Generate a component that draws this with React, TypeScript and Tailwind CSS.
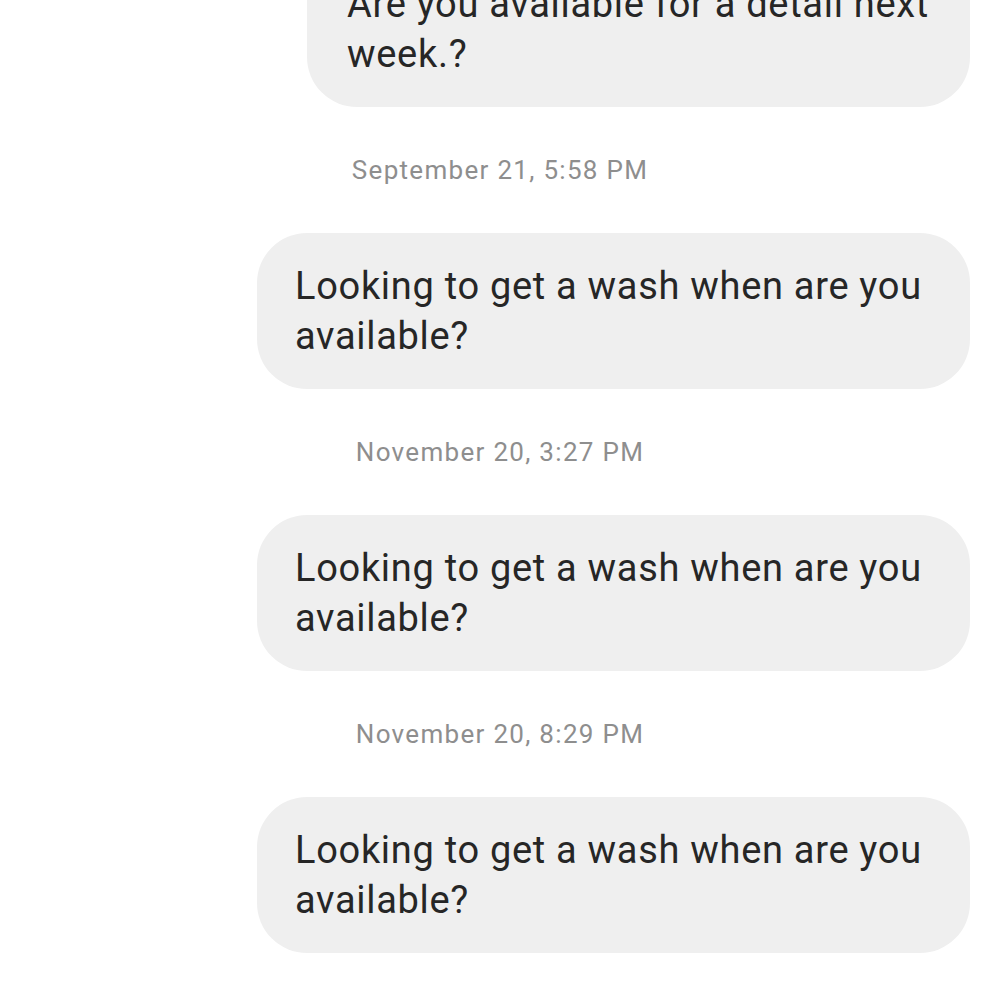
const messages = [
  { time: 'September 21, 5:58 PM', text: 'Looking to get a wash when are you available?' },
  { time: 'November 20, 3:27 PM', text: 'Looking to get a wash when are you available?' },
  { time: 'November 20, 8:29 PM', text: 'Looking to get a wash when are you available?' },
];

function Bubble({ text, className }: { text: string; className: string }) {
  return (
    <div
      className={`self-end mr-[30px] rounded-[50px] bg-[#efefef] pr-[20px] py-[28px] text-[38px] leading-[50px] tracking-[0.7px] text-[#262626] ${className}`}
    >
      {text}
    </div>
  );
}

export default function App() {
  return (
    <div className="w-[1000px] h-[1000px] overflow-hidden bg-white font-['Roboto',sans-serif]">
      <div className="flex flex-col">
        <Bubble text="Are you available for a detail next week.?" className="w-[663px] -mt-[49px] pl-[40px]" />
        {messages.map((m) => (
          <div key={m.time} className="flex flex-col">
            <div className="py-[47px] text-center text-[26px] leading-[32px] tracking-[1.3px] text-[#8e8e8e]">{m.time}</div>
            <Bubble text={m.text} className="w-[713px] pl-[38px]" />
          </div>
        ))}
      </div>
    </div>
  );
}
